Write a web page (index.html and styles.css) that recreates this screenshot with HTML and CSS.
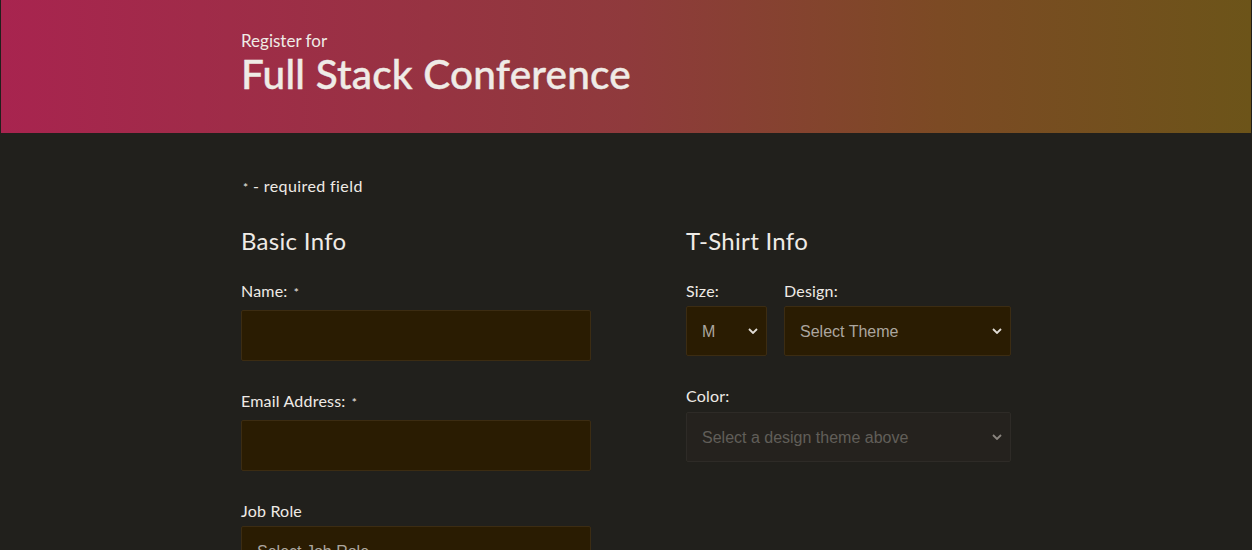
FILE: index.html
```html
<!DOCTYPE html>
<html lang="en">
<head>
<meta charset="utf-8">
<title>Register for Full Stack Conference</title>
<link rel="stylesheet" href="styles.css">
</head>
<body>
<header class="hero">
  <div class="container">
    <p class="hero-sub">Register for</p>
    <h1 class="hero-title">Full Stack Conference</h1>
  </div>
</header>
<main class="container">
  <p class="note"><span class="ast">*</span> - required field</p>
  <div class="grid">
    <section class="col col-basic">
      <h2 class="sec-title">Basic Info</h2>
      <div class="field">
        <label class="lbl" for="name">Name: <span class="ast">*</span></label>
        <input class="inp" id="name" type="text">
      </div>
      <div class="field">
        <label class="lbl" for="email">Email Address: <span class="ast">*</span></label>
        <input class="inp" id="email" type="email">
      </div>
      <div class="field">
        <label class="lbl lbl-sel" for="role">Job Role</label>
        <div class="sel-wrap role">
          <select class="sel" id="role"><option>Select Job Role</option></select>
          <svg class="chev" viewBox="0 0 10 6" width="10" height="6"><path d="M1 1l4 4 4-4" fill="none" stroke="currentColor" stroke-width="1.8"/></svg>
        </div>
      </div>
    </section>
    <section class="col col-shirt">
      <h2 class="sec-title">T-Shirt Info</h2>
      <div class="row">
        <div class="field">
          <label class="lbl lbl-sel" for="size">Size:</label>
          <div class="sel-wrap size">
            <select class="sel" id="size"><option>M</option></select>
            <svg class="chev" viewBox="0 0 10 6" width="10" height="6"><path d="M1 1l4 4 4-4" fill="none" stroke="currentColor" stroke-width="1.8"/></svg>
          </div>
        </div>
        <div class="field">
          <label class="lbl lbl-sel" for="design">Design:</label>
          <div class="sel-wrap design">
            <select class="sel" id="design"><option>Select Theme</option></select>
            <svg class="chev" viewBox="0 0 10 6" width="10" height="6"><path d="M1 1l4 4 4-4" fill="none" stroke="currentColor" stroke-width="1.8"/></svg>
          </div>
        </div>
      </div>
      <div class="field">
        <label class="lbl lbl-color" for="color">Color:</label>
        <div class="sel-wrap color disabled">
          <select class="sel" id="color" disabled><option>Select a design theme above</option></select>
          <svg class="chev" viewBox="0 0 10 6" width="10" height="6"><path d="M1 1l4 4 4-4" fill="none" stroke="currentColor" stroke-width="1.8"/></svg>
        </div>
      </div>
    </section>
  </div>
</main>
</body>
</html>
```
FILE: styles.css
```css
* { box-sizing: border-box; }
html, body { margin: 0; padding: 0; }
body {
  background: #21201c;
  color: #efebe6;
  font-family: "Lato", "Noto Sans", sans-serif;
  overflow: hidden;
  height: 550px;
}
.container {
  width: 770px;
  margin: 0 auto;
}
.hero {
  margin: 0 1px;
  height: 133px;
  background: linear-gradient(90deg, #a8244f 0%, #8f3a3c 50%, #7c4a24 75%, #6c5419 100%);
  padding-top: 31px;
}
.hero-sub {
  margin: 0;
  font-size: 17px;
  line-height: 20px;
}
.hero-title {
  margin: 0;
  font-size: 40.5px;
  font-weight: 500;
  line-height: 46px;
  letter-spacing: 0.2px;
  -webkit-text-stroke: 0.4px #efebe6;
}
.note {
  margin: 44px 0 0;
  font-size: 16px;
  line-height: 18px;
  letter-spacing: 0.4px;
}
.ast { font-size: 12px; vertical-align: 0; margin-left: 2px; }
.grid {
  display: grid;
  grid-template-columns: 445px 325px;
  margin-top: 29px;
}
.sec-title {
  margin: 0 0 26px;
  font-size: 24px;
  font-weight: 400;
  line-height: 30px;
  letter-spacing: 0.3px;
}
.field { margin-bottom: 31px; }
.lbl {
  display: block;
  font-size: 16px;
  line-height: 18px;
  margin-bottom: 8px;
  letter-spacing: 0.2px;
}
.lbl-sel { margin-bottom: 6px; }
.lbl-color { margin-bottom: 7px; }
.inp {
  display: block;
  width: 350px;
  height: 51px;
  background: #2a1c02;
  border: 1px solid #3c2c12;
  border-radius: 2px;
  color: #efebe6;
  outline: none;
}
.col-basic .field + .field { margin-top: 11px; }
.sel-wrap {
  position: relative;
  width: 350px;
  height: 50px;
  color: #e2ddd7;
}
.sel {
  -webkit-appearance: none;
  appearance: none;
  width: 100%;
  height: 100%;
  background: #2a1c02;
  border: 1px solid #3c2c12;
  border-radius: 2px;
  color: #aca69f;
  font-family: "Liberation Sans", Arial, sans-serif;
  font-size: 16px;
  padding: 0 30px 0 15px;
  outline: none;
}
.chev {
  position: absolute;
  right: 9px;
  top: 22px;
  pointer-events: none;
}
.role .chev { top: 26px; }
.row {
  display: flex;
  gap: 17px;
}
.size { width: 81px; }
.design { width: 227px; }
.color { width: 325px; }
.disabled .sel {
  background: #27241f;
  border-color: #34312c;
  color: #7d7973;
}
.disabled { color: #8a857f; }
```
